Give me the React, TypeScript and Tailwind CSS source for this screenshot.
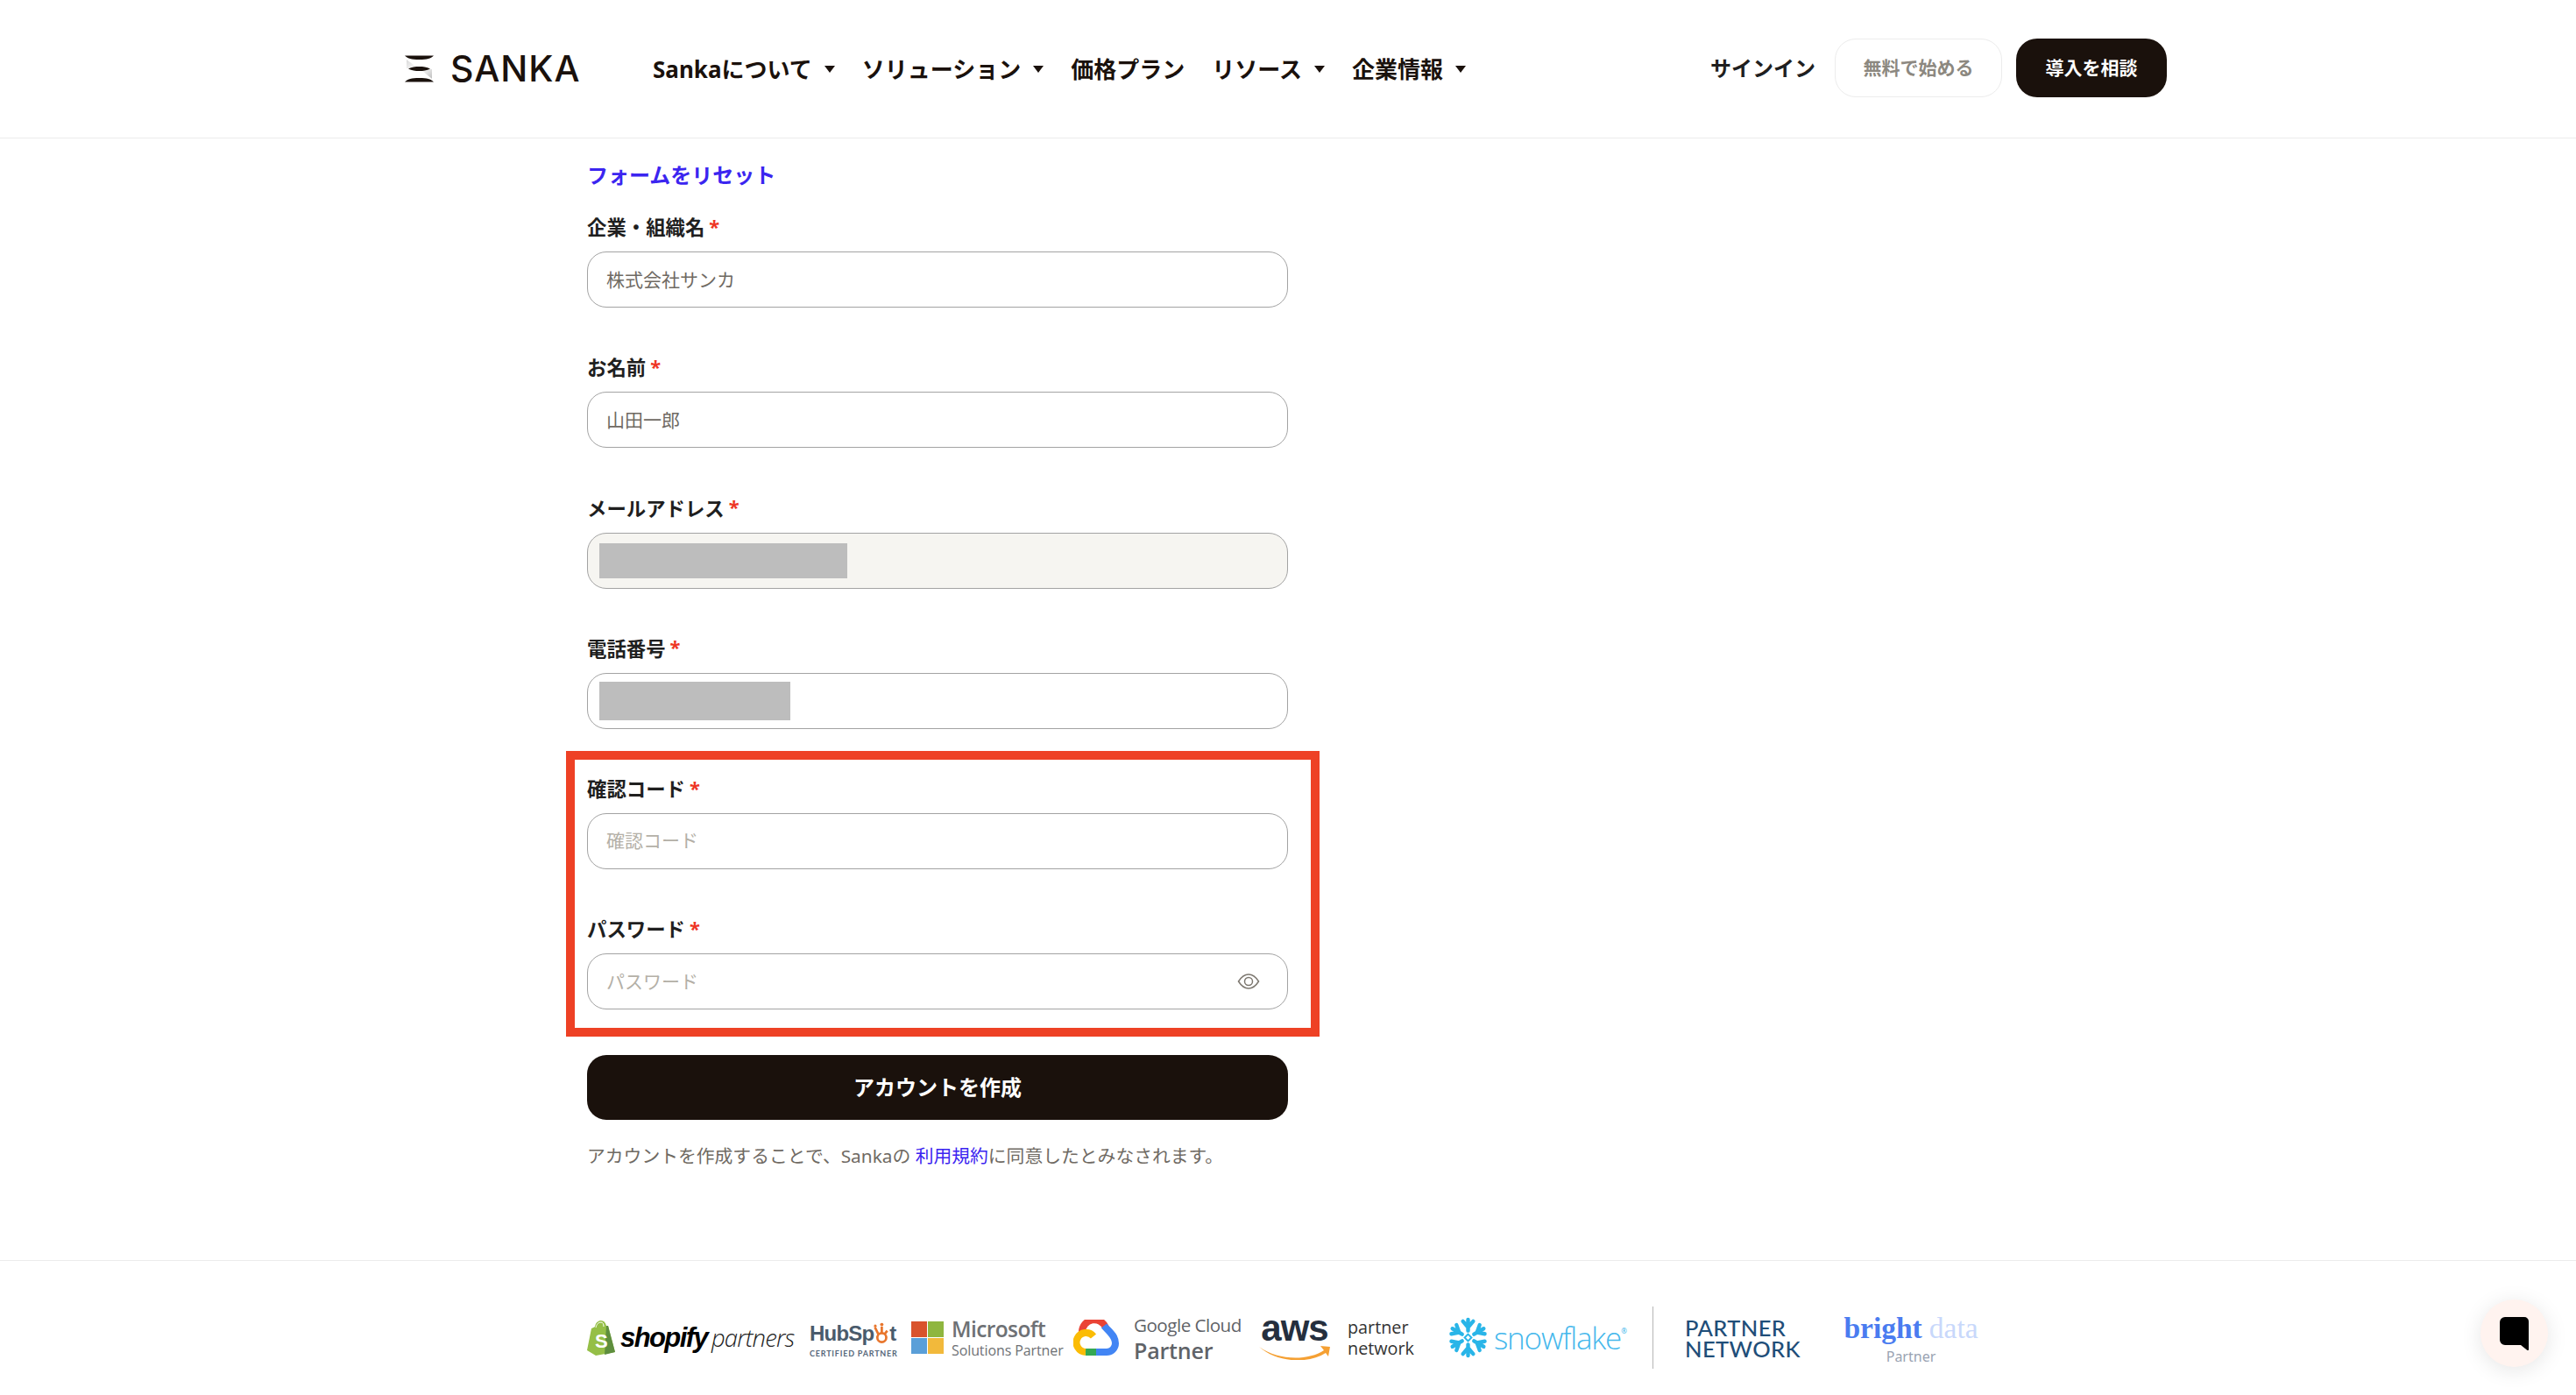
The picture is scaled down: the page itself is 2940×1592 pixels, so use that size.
import React from 'react';

const navItems = [
  { label: 'Sankaについて', caret: true },
  { label: 'ソリューション', caret: true },
  { label: '価格プラン', caret: false },
  { label: 'リソース', caret: true },
  { label: '企業情報', caret: true },
];

const Caret = () => (
  <span className="ml-[14px] inline-block h-0 w-0 border-x-[6.5px] border-t-[8px] border-x-transparent border-t-[#1a110c]" />
);

const SankaMark = () => (
  <svg width="33" height="31" viewBox="0 0 33 31" className="shrink-0">
    <defs>
      <linearGradient id="sankaFade" x1="0" y1="0" x2="1" y2="1">
        <stop offset="0" stopColor="#d8d8d8" />
        <stop offset="1" stopColor="#ffffff" />
      </linearGradient>
      <linearGradient id="sankaFade2" x1="1" y1="1" x2="0" y2="0">
        <stop offset="0" stopColor="#bdbdbd" />
        <stop offset="1" stopColor="#ffffff" />
      </linearGradient>
    </defs>
    <path d="M2 5 L14 14 L14 15 L2 15 Z" fill="url(#sankaFade)" />
    <path d="M31 27 L19 17 L19 16 L31 16 Z" fill="url(#sankaFade2)" />
    <path d="M0 0.5 H33 C29 4 26 5 16.5 5 C7 5 4 4 0 0.5 Z" fill="#1a110c" />
    <path d="M4 15.5 C8 13.5 12 13 16.5 13 C21 13 25 13.5 29 15.5 C25 17.5 21 18 16.5 18 C12 18 8 17.5 4 15.5 Z" fill="#1a110c" />
    <path d="M0 30.5 H33 C29 27 26 26 16.5 26 C7 26 4 27 0 30.5 Z" fill="#1a110c" />
  </svg>
);

const EyeIcon = () => (
  <svg width="26" height="18" viewBox="0 0 26 18" fill="none" stroke="#7d7870" strokeWidth="1.5" className="shrink-0">
    <path d="M1.5 9 C5 3.5 9 1 13 1 C17 1 21 3.5 24.5 9 C21 14.5 17 17 13 17 C9 17 5 14.5 1.5 9 Z" />
    <circle cx="13" cy="9" r="4.5" />
  </svg>
);

const Field = ({ label, children }: { label: string; children: React.ReactNode }) => (
  <div className="flex flex-col">
    <div className="flex h-[32px] items-center pb-[2px] text-[22.4px] font-bold text-[#1f1f1f]">
      {label}
      <span className="ml-[5px] -translate-y-[2px] text-[22px] text-[#ee3524]">*</span>
    </div>
    <div className="mt-[10px]">{children}</div>
  </div>
);

const boxClass = 'flex h-[64px] w-[800px] items-center rounded-[22px] border border-[#a3a3a3]';

const TextInput = ({ value, placeholder }: { value?: string; placeholder?: string }) => (
  <div className={boxClass}>
    <input
      readOnly
      value={value}
      placeholder={placeholder}
      className="h-full w-full rounded-[22px] bg-transparent pb-[2px] pl-[21px] text-[21px] text-[#6f6a63] outline-none placeholder:text-[#b4b0a7]"
    />
  </div>
);

const ShopifyLogo = () => (
  <div className="flex w-[239px] items-center">
    <svg width="34" height="40" viewBox="0 0 34 40" className="shrink-0">
      <path d="M2 34 L7 9 C9 8 10 8 11 7 C12 2 15 0 18 0 C21 0 23 2 24 6 L26 6 L34 36 L12 40 Z" fill="#95bf47" />
      <path d="M24 6 L26 6 L34 36 L22 39 Z" fill="#5e8e3e" />
      <path d="M12 8 C13 4 15 2 18 2 C20 2 21 4 21 7" fill="none" stroke="#ffffff" strokeWidth="1" />
      <text x="11" y="31" fontFamily="Liberation Sans" fontWeight="700" fontSize="22" fill="#ffffff">S</text>
    </svg>
    <span className="ml-[6px] font-['Liberation_Sans',sans-serif] text-[31px] font-bold italic leading-none tracking-[-1.6px] text-black">shopify</span>
    <span className="ml-[5px] font-['Open_Sans',sans-serif] text-[27.5px] font-light italic leading-none tracking-[-0.9px] text-[#222]">partners</span>
  </div>
);

const HubSpotLogo = () => (
  <div className="flex w-[99px] flex-col items-start">
    <div className="flex h-[30px] items-end font-['Liberation_Sans',sans-serif] text-[24px] font-bold leading-none tracking-[-0.8px] text-[#4a5b6c]">
      <span>HubSp</span>
      <svg width="18" height="30" viewBox="0 0 23 34" fill="none" stroke="#e8762d" strokeWidth="3.5" className="-mb-[2px] shrink-0">
        <circle cx="12" cy="24" r="6.5" />
        <path d="M12 17 V8 M7 19 L2 9 M16 19 L20 14" />
        <circle cx="12" cy="5" r="2.5" fill="#e8762d" stroke="none" />
        <circle cx="2.5" cy="7" r="2" fill="#e8762d" stroke="none" />
      </svg>
      <span>t</span>
    </div>
    <span className="mt-[6px] whitespace-nowrap font-['Lato',sans-serif] text-[9px] font-bold leading-none tracking-[0.8px] text-[#56677a]">CERTIFIED PARTNER</span>
  </div>
);

const MicrosoftLogo = () => (
  <div className="flex w-[174px] items-center">
    <div className="grid h-[37px] w-[37px] shrink-0 grid-cols-2 gap-[1.5px]">
      <div className="bg-[#d9532c]" />
      <div className="bg-[#8fb63f]" />
      <div className="bg-[#5a9fd8]" />
      <div className="bg-[#f2b93b]" />
    </div>
    <div className="ml-[9px] flex flex-col whitespace-nowrap font-['Open_Sans',sans-serif] text-[#6e7175]">
      <span className="text-[24.5px] font-semibold leading-[28px] tracking-[-0.6px]">Microsoft</span>
      <span className="text-[16px] leading-[20px] tracking-[-0.1px]">Solutions Partner</span>
    </div>
  </div>
);

const GoogleCloudLogo = () => (
  <div className="flex w-[192px] items-center">
    <svg width="52" height="42" viewBox="0 0 52 42" fill="none" strokeWidth="8" className="shrink-0">
      <path d="M10 14 A14 14 0 0 1 37 9" stroke="#ea4335" />
      <path d="M35 7 C40 13 48 18 48 27 A10 10 0 0 1 38 37 H26" stroke="#4285f4" />
      <path d="M14 37 H26" stroke="#34a853" />
      <path d="M14 37 A11 11 0 1 1 23 19" stroke="#fbbc05" />
    </svg>
    <div className="ml-[17px] flex flex-col whitespace-nowrap font-['Open_Sans',sans-serif] text-[#5f6368]">
      <span className="text-[20.6px] leading-[28px] tracking-[-0.5px]">Google Cloud</span>
      <span className="text-[25px] font-semibold leading-[30px] tracking-[-0.2px]">Partner</span>
    </div>
  </div>
);

const AwsLogo = () => (
  <div className="flex w-[176px] items-center">
    <div className="flex w-[81px] shrink-0 flex-col items-center">
      <span className="font-['Liberation_Sans',sans-serif] text-[42px] font-bold leading-[28px] tracking-[-1px] text-[#252f3e]">aws</span>
      <svg width="81" height="18" viewBox="0 0 81 18" className="mt-[4px]">
        <path d="M0 3 C22 19 56 19 74 7 L70 2 L81 3 L79 14 L76 10 C56 23 20 21 0 3 Z" fill="#f5a033" />
      </svg>
    </div>
    <div className="ml-[20px] flex flex-col whitespace-nowrap font-['Open_Sans',sans-serif] text-[19.8px] leading-[24px] text-[#333]">
      <span>partner</span>
      <span>network</span>
    </div>
  </div>
);

const SnowflakeLogo = () => (
  <div className="flex w-[199px] items-center">
    <svg width="47" height="47" viewBox="-24 -24 48 48" fill="none" stroke="#29b5e8" strokeWidth="4.5" strokeLinecap="round" className="shrink-0">
      {[0, 60, 120, 180, 240, 300].map((angle) => (
        <g key={angle} transform={`rotate(${angle})`}>
          <path d="M0 -8 V-21 M-6 -19 L0 -12 L6 -19" />
        </g>
      ))}
      <path d="M0 -4 L4 0 L0 4 L-4 0 Z" strokeWidth="2" />
    </svg>
    <span className="ml-[6px] font-['Open_Sans',sans-serif] text-[35px] font-light leading-none tracking-[-1.2px] text-[#45b8ec]">snowflake</span>
    <span className="-mt-[16px] text-[8px] text-[#45b8ec]">®</span>
  </div>
);

const BrightDataLogo = () => (
  <div className="flex w-[152px] flex-col items-center">
    <div className="flex whitespace-nowrap font-['Liberation_Serif',serif] text-[33.5px] leading-[40px]">
      <span className="font-bold text-[#4a7cf0]">bright</span>
      <span className="ml-[8px] text-[#c8d8fb]">data</span>
    </div>
    <span className="mt-[2px] text-[16px] leading-[20px] text-[#9aa3b2]">Partner</span>
  </div>
);

export default function App() {
  return (
    <div className="relative h-[1592px] w-full overflow-hidden bg-white font-['Noto_Sans','Noto_Sans_CJK_JP',sans-serif]">
      <header className="flex h-[158px] items-center justify-between border-b border-[#ececec] pl-[462px] pr-[467px]">
        <div className="flex items-center">
          <div className="flex w-[283px] items-center">
            <SankaMark />
            <span className="ml-[19px] font-['Inter',sans-serif] text-[41px] font-medium leading-none tracking-[1px] text-[#1a110c]">SANKA</span>
          </div>
          <nav className="flex items-center gap-[31px] pt-[1px] text-[26px] font-bold text-[#1a110c]">
            {navItems.map((item) => (
              <div key={item.label} className="flex items-center whitespace-nowrap">
                {item.label}
                {item.caret && <Caret />}
              </div>
            ))}
          </nav>
        </div>
        <div className="-mt-[2px] flex items-center">
          <span className="text-[24px] font-bold text-[#1f1f1f]">サインイン</span>
          <div className="ml-[22px] flex h-[67px] w-[191px] items-center justify-center rounded-[24px] border border-[#ececec] text-[21px] font-bold text-[#8c8880]">無料で始める</div>
          <div className="ml-[16px] flex h-[67px] w-[172px] items-center justify-center rounded-[24px] bg-[#1a110c] text-[21px] font-bold text-white">導入を相談</div>
        </div>
      </header>

      <main className="flex h-[1281px] flex-col border-b border-[#ececec] pl-[670px] pt-[24px]">
        <a className="flex h-[36px] items-center text-[24px] font-bold text-[#3b25f0]">フォームをリセット</a>
        <div className="mt-[27px] flex flex-col gap-[54.25px]">
          <Field label="企業・組織名">
            <TextInput value="株式会社サンカ" />
          </Field>
          <Field label="お名前">
            <TextInput value="山田一郎" />
          </Field>
          <Field label="メールアドレス">
            <div className={`${boxClass} bg-[#f6f5f1] pl-[13px]`}>
              <div className="h-[40px] w-[283px] bg-[#bdbdbd]" />
            </div>
          </Field>
          <Field label="電話番号">
            <div className={`${boxClass} pl-[13px]`}>
              <div className="h-[44px] w-[218px] bg-[#bdbdbd]" />
            </div>
          </Field>
          <Field label="確認コード">
            <TextInput placeholder="確認コード" />
          </Field>
          <Field label="パスワード">
            <div className={`${boxClass} pr-[31px]`}>
              <input
                readOnly
                placeholder="パスワード"
                className="h-full min-w-0 flex-1 rounded-[22px] bg-transparent pl-[21px] text-[21px] outline-none placeholder:text-[#b4b0a7]"
              />
              <EyeIcon />
            </div>
          </Field>
        </div>
        <button className="mt-[52px] flex h-[74px] w-[800px] items-center justify-center rounded-[22px] bg-[#1a110c] text-[24px] font-bold text-white">アカウントを作成</button>
        <p className="mt-[26px] h-[32px] text-[20.8px] leading-[30px] text-[#6f6a63]">
          アカウントを作成することで、Sankaの <a className="text-[#3b25f0]">利用規約</a>に同意したとみなされます。
        </p>
      </main>

      <footer className="flex h-[153px] items-start pl-[668px] pt-[52px]">
        <div className="flex h-[71px] items-center">
          <ShopifyLogo />
          <div className="ml-[17px]"><HubSpotLogo /></div>
          <div className="ml-[17px]"><MicrosoftLogo /></div>
          <div className="ml-[11px]"><GoogleCloudLogo /></div>
          <div className="ml-[20px]"><AwsLogo /></div>
          <div className="ml-[39px]"><SnowflakeLogo /></div>
          <div className="ml-[35px] h-[71px] w-px bg-[#b5b5b5]" />
          <div className="ml-[36px] flex w-[132px] flex-col whitespace-nowrap font-['Lato',sans-serif] text-[25.5px] font-medium leading-[24px] tracking-[0.4px] text-[#1f4e79]">
            <span>PARTNER</span>
            <span>NETWORK</span>
          </div>
          <div className="ml-[50px]"><BrightDataLogo /></div>
        </div>
      </footer>

      {/* highlight frame drawn over the last two fields */}
      <div className="absolute left-[646px] top-[857px] h-[326px] w-[860px] border-[10.5px] border-[#ee4125]" />

      {/* chat launcher */}
      <div className="absolute left-[2831px] top-[1483px] flex h-[77px] w-[77px] items-center justify-center rounded-full bg-[#fff3ef] shadow-[0_4px_24px_rgba(0,0,0,0.1)]">
        <svg width="33" height="38" viewBox="0 0 33 38">
          <path d="M6 0 H28 A5 5 0 0 1 33 5 V37 A1 1 0 0 1 31.5 38 L24 32 H6 A6 6 0 0 1 0 26 V6 A6 6 0 0 1 6 0 Z" fill="#000" />
        </svg>
      </div>
    </div>
  );
}
